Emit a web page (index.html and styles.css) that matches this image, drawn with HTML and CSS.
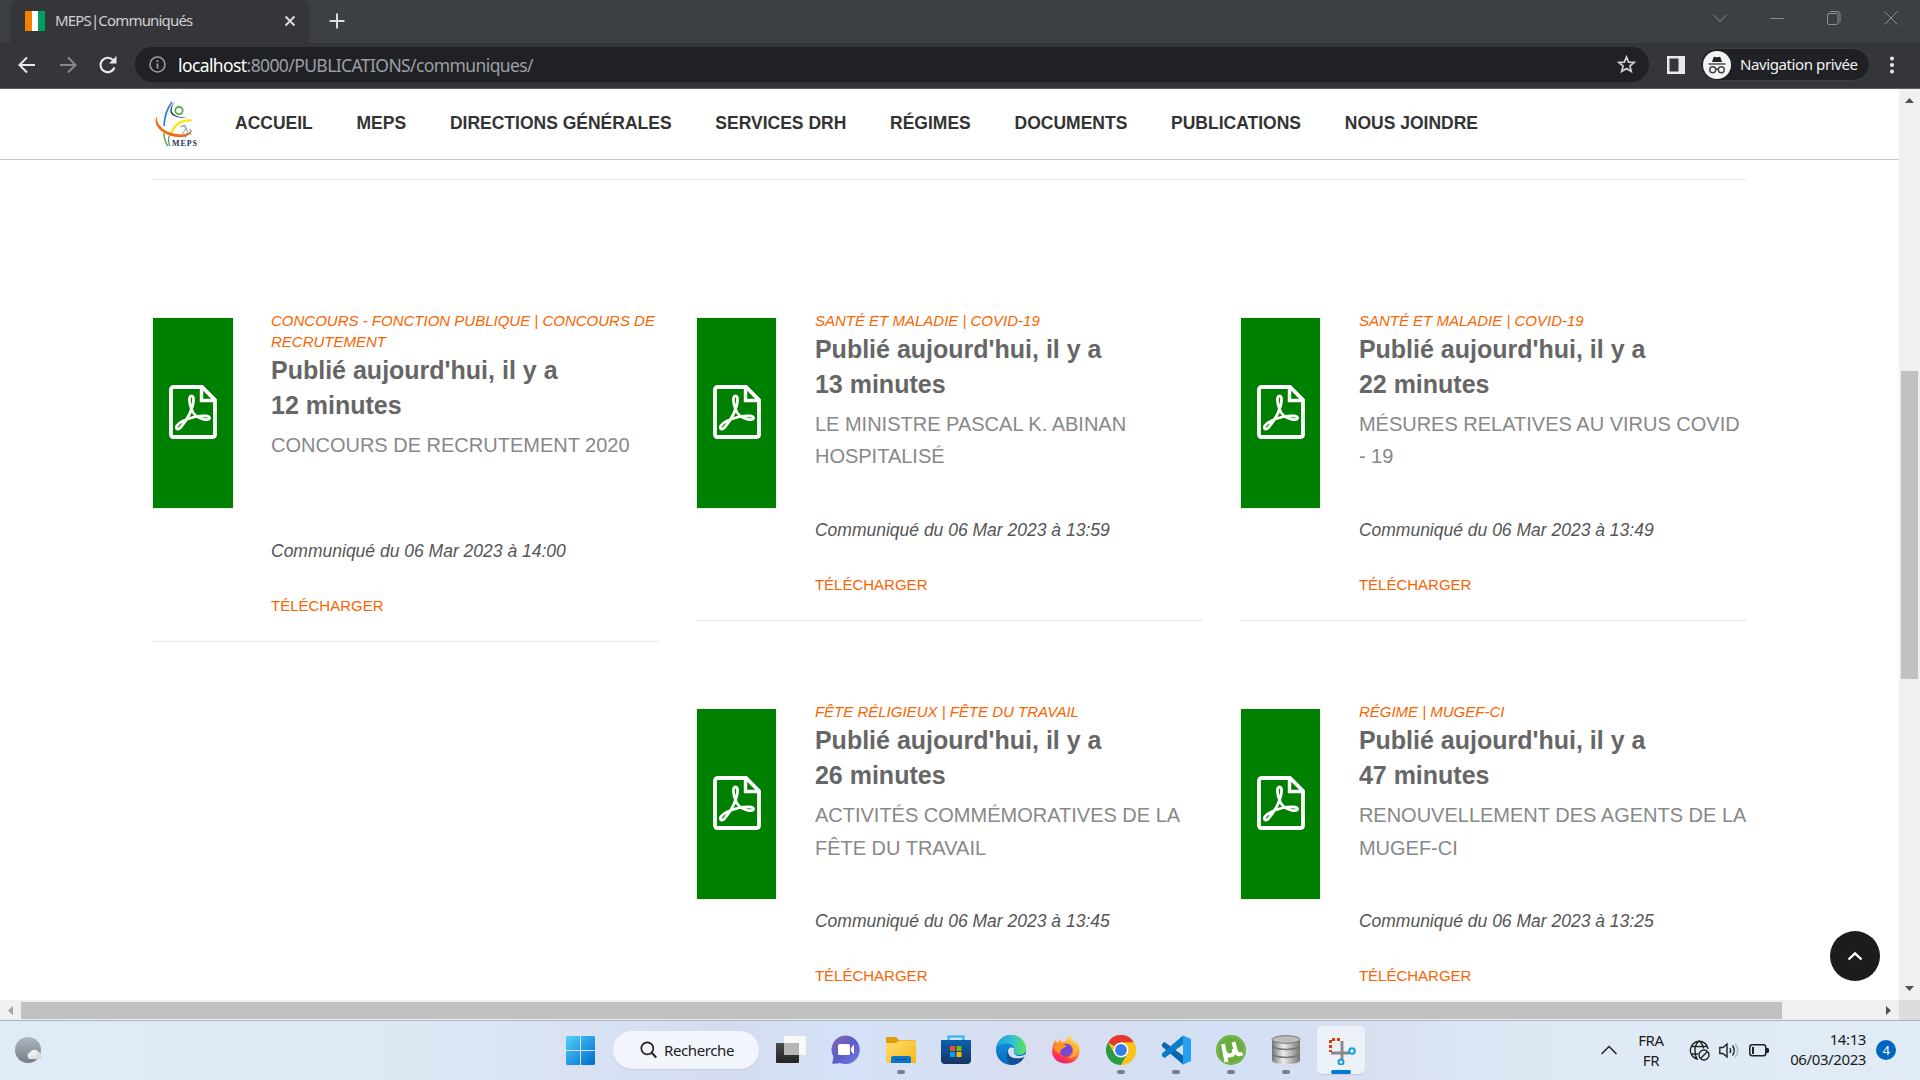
FILE: index.html
```html
<!DOCTYPE html>
<html lang="fr">
<head>
<meta charset="utf-8">
<title>MEPS|Communiqués</title>
<link rel="stylesheet" href="styles.css">
</head>
<body>
<svg width="0" height="0" class="defs">
  <defs>
    <symbol id="pdf" viewBox="0 0 48 54">
      <path d="M5 2H33L46 15V49.500Q46 52 43.500 52H4.500Q2 52 2 49.500V4.500Q2 2 5 2Z" fill="none" stroke="#fff" stroke-width="3.800"/>
      <path d="M32.500 2V15.500H46" fill="none" stroke="#fff" stroke-width="3.400"/>
      <path d="M22.500 11C19.500 11 20 18 22.500 24C20 32 16 37 12 42C9 45.500 6 44 8 40.500C11 36.500 19 33.500 27 31.500C36 30 41 31 40.500 33.500C39.500 36 31 34 27 31C24.500 28.500 23 26 22.500 24C25 18 25.500 11 22.500 11Z" fill="none" stroke="#fff" stroke-width="2.800"/>
    </symbol>
  </defs>
</svg>
<div class="screen">
  <div class="tabbar">
    <div class="tab">
      <span class="flag"><i class="o"></i><i class="w"></i><i class="g"></i></span>
      <span class="tab-title">MEPS|Communiqués</span>
      <svg width="12" height="12" viewBox="0 0 12 12"><path d="M1.500 1.500L10.500 10.500M10.500 1.500L1.500 10.500" stroke="#dadce0" stroke-width="1.900"/></svg>
    </div>
    <svg class="plus" width="16" height="16" viewBox="0 0 16 16"><path d="M8 .5V15.500M.5 8H15.500" stroke="#dadce0" stroke-width="2"/></svg>
    <div class="winbtns">
      <svg width="14" height="14" viewBox="0 0 14 14"><path d="M.5 4L7 10.500L13.500 4"/></svg>
      <svg width="14" height="14" viewBox="0 0 14 14"><path d="M.5 7.500H13.500"/></svg>
      <svg width="14" height="14" viewBox="0 0 14 14"><rect x=".5" y="2.500" width="10.500" height="11" rx="1.500"/><path d="M2.500 1Q3 .5 4 .5H10.500Q13 .5 13 3V10Q13 11 12.500 11.500"/></svg>
      <svg width="14" height="14" viewBox="0 0 14 14"><path d="M.5 .5L13.500 13.500M13.500 .5L.5 13.500"/></svg>
    </div>
  </div>
  <div class="toolbar">
    <svg width="18" height="18" viewBox="0 0 18 18"><path d="M17 9H2M9 1.500L1.500 9L9 16.500" fill="none" stroke="#e8eaed" stroke-width="2"/></svg>
    <svg class="fwd" width="18" height="18" viewBox="0 0 18 18"><path d="M1 9H16M9 1.500L16.500 9L9 16.500" fill="none" stroke="#85878b" stroke-width="2"/></svg>
    <svg class="reload" width="20" height="20" viewBox="0 0 20 20"><path d="M16.500 12.500A7.200 7.200 0 1 1 15 5" fill="none" stroke="#e8eaed" stroke-width="2.200"/><path d="M18.500 1V8.500H11Z" fill="#e8eaed"/></svg>
    <div class="omnibox">
      <svg width="17" height="17" viewBox="0 0 17 17"><circle cx="8.500" cy="8.500" r="7.500" fill="none" stroke="#9aa0a6" stroke-width="1.600"/><path d="M8.500 7.500V12.500M8.500 4.200V6" stroke="#9aa0a6" stroke-width="1.800"/></svg>
      <span class="url"><b>localhost</b>:8000/PUBLICATIONS/communiques/</span>
      <svg width="19" height="19" viewBox="0 0 19 19"><path d="M9.500 2L11.600 7.100L17.200 7.500L12.900 11.100L14.300 16.500L9.500 13.600L4.700 16.500L6.100 11.100L1.800 7.500L7.400 7.100Z" fill="none" stroke="#cfd1d4" stroke-width="1.700"/></svg>
    </div>
    <svg class="panel" width="18" height="18" viewBox="0 0 18 18"><path fill-rule="evenodd" d="M0 0H18V18H0ZM2.500 2.500V15.500H11.500V2.500Z" fill="#e8eaed"/></svg>
    <div class="private">
      <svg width="28" height="28" viewBox="0 0 28 28"><circle cx="14" cy="14" r="14" fill="#f1f3f4"/><path d="M9 11L10.500 6.500Q11 5.500 12.200 6Q14 6.700 15.800 6Q17 5.500 17.500 6.500L19 11Z" fill="#202124"/><path d="M5.500 13H22.500" stroke="#3c4043" stroke-width="1.400"/><g fill="none" stroke="#3c4043" stroke-width="1.400"><circle cx="9.700" cy="18.700" r="3"/><circle cx="18.300" cy="18.700" r="3"/><path d="M12.700 18.500Q14 17.500 15.300 18.500"/></g></svg>
      <span>Navigation privée</span>
    </div>
    <svg class="more" width="4" height="18" viewBox="0 0 4 18"><circle cx="2" cy="2.500" r="2"/><circle cx="2" cy="9" r="2"/><circle cx="2" cy="15.500" r="2"/></svg>
  </div>

  <div class="viewport">
    <div class="page">
      <header class="site-nav">
        <svg class="logo" width="42" height="48" viewBox="0 0 42 48">
          <path d="M17 2Q9.500 12 9 26" fill="none" stroke="#2a7fc4" stroke-width="1.700"/>
          <path d="M19.500 2Q14 11 19 14.500Q24 18 32 17.500Q24 19 18 15.500Q12 11 19.500 2Z" fill="#173a63"/>
          <circle cx="24" cy="10.500" r="3.700" fill="none" stroke="#43ad3c" stroke-width="1.700"/>
          <path d="M16 33Q22 19 37 20.500" fill="none" stroke="#fbe51b" stroke-width="2.200"/>
          <path d="M1.500 16Q1 26 13 32Q30 38 37.500 29.500Q34 41 14 35.500Q-3 28 1.500 16Z" fill="#ee6b12"/>
          <path d="M25 27L30 25L33 33L30 38M27 35L31 28L28 26M35 29L36 35" fill="none" stroke="#7d93a8" stroke-width=".9"/>
          <path d="M9 33Q9 41 13 46" fill="none" stroke="#57ad49" stroke-width="1.500"/>
          <path d="M14 36Q13 41 14.500 46" fill="none" stroke="#49657f" stroke-width="1"/>
          <text x="17" y="46" textLength="25" font-family="Liberation Serif, serif" font-weight="700" font-size="8" fill="#1c3553">MEPS</text>
        </svg>
        <nav>
          <a>ACCUEIL</a><a>MEPS</a><a>DIRECTIONS GÉNÉRALES</a><a>SERVICES DRH</a><a>RÉGIMES</a><a>DOCUMENTS</a><a>PUBLICATIONS</a><a>NOUS JOINDRE</a>
        </nav>
      </header>
      <main>
        <hr>
        <section class="cards">
          <article>
            <div class="thumb"><svg width="48" height="54"><use href="#pdf"/></svg></div>
            <div class="body"><p class="cat">CONCOURS - FONCTION PUBLIQUE | CONCOURS DE RECRUTEMENT</p><h3>Publié aujourd'hui, il y a<br>12 minutes</h3><p class="desc">CONCOURS DE RECRUTEMENT 2020</p><p class="date">Communiqué du 06 Mar 2023 à 14:00</p><a>TÉLÉCHARGER</a></div>
          </article>
          <article>
            <div class="thumb"><svg width="48" height="54"><use href="#pdf"/></svg></div>
            <div class="body"><p class="cat">SANTÉ ET MALADIE | COVID-19</p><h3>Publié aujourd'hui, il y a<br>13 minutes</h3><p class="desc">LE MINISTRE PASCAL K. ABINAN HOSPITALISÉ</p><p class="date">Communiqué du 06 Mar 2023 à 13:59</p><a>TÉLÉCHARGER</a></div>
          </article>
          <article>
            <div class="thumb"><svg width="48" height="54"><use href="#pdf"/></svg></div>
            <div class="body"><p class="cat">SANTÉ ET MALADIE | COVID-19</p><h3>Publié aujourd'hui, il y a<br>22 minutes</h3><p class="desc">MÉSURES RELATIVES AU VIRUS COVID - 19</p><p class="date">Communiqué du 06 Mar 2023 à 13:49</p><a>TÉLÉCHARGER</a></div>
          </article>
          <article class="second">
            <div class="thumb"><svg width="48" height="54"><use href="#pdf"/></svg></div>
            <div class="body"><p class="cat">FÊTE RÉLIGIEUX | FÊTE DU TRAVAIL</p><h3>Publié aujourd'hui, il y a<br>26 minutes</h3><p class="desc">ACTIVITÉS COMMÉMORATIVES DE LA FÊTE DU TRAVAIL</p><p class="date">Communiqué du 06 Mar 2023 à 13:45</p><a>TÉLÉCHARGER</a></div>
          </article>
          <article>
            <div class="thumb"><svg width="48" height="54"><use href="#pdf"/></svg></div>
            <div class="body"><p class="cat">RÉGIME | MUGEF-CI</p><h3>Publié aujourd'hui, il y a<br>47 minutes</h3><p class="desc">RENOUVELLEMENT DES AGENTS DE LA MUGEF-CI</p><p class="date">Communiqué du 06 Mar 2023 à 13:25</p><a>TÉLÉCHARGER</a></div>
          </article>
        </section>
      </main>
      <div class="totop"><svg width="16" height="10" viewBox="0 0 16 10"><path d="M1.500 8.500L8 2.300L14.500 8.500" fill="none" stroke="#fff" stroke-width="2.400"/></svg></div>
    </div>
    <div class="vscroll">
      <svg width="9" height="5" viewBox="0 0 9 5"><path d="M0 5L4.500 0L9 5Z" fill="#505050"/></svg>
      <div class="vthumb"></div>
      <svg class="down" width="9" height="5" viewBox="0 0 9 5"><path d="M0 0L4.500 5L9 0Z" fill="#505050"/></svg>
    </div>
    <div class="hscroll">
      <svg width="5" height="9" viewBox="0 0 5 9"><path d="M5 0L0 4.500L5 9Z" fill="#a3a3a3"/></svg>
      <div class="hthumb"></div>
      <svg class="right" width="5" height="9" viewBox="0 0 5 9"><path d="M0 0L5 4.500L0 9Z" fill="#505050"/></svg>
    </div>
    <div class="corner"></div>
  </div>

  <footer class="taskbar">
    <svg class="weather" width="28" height="26" viewBox="0 0 28 26"><defs><linearGradient id="wg" x2="0" y2="1"><stop stop-color="#adb8c2"/><stop offset="1" stop-color="#777d84"/></linearGradient><linearGradient id="wc" x2="1" y2="1"><stop stop-color="#fff"/><stop offset="1" stop-color="#cdd2d6"/></linearGradient></defs><circle cx="13" cy="13" r="13" fill="url(#wg)"/><path d="M14.500 22A3.500 3.500 0 0 1 15 15.500A5 5 0 0 1 24 15.500A3.400 3.400 0 0 1 25 22Z" fill="url(#wc)"/></svg>
    <div class="apps">
      <svg class="start" width="29" height="29" viewBox="0 0 29 29"><defs><linearGradient id="sg" x2="1" y2="1"><stop stop-color="#4fd2fb"/><stop offset="1" stop-color="#0069cd"/></linearGradient></defs><path d="M1 0H14V14H0V1ZM15 0H28L29 1V14H15ZM0 15H14V29H1L0 28ZM15 15H29V28L28 29H15Z" fill="url(#sg)"/></svg>
      <div class="search"><svg width="17" height="18" viewBox="0 0 17 18"><circle cx="7.300" cy="7.300" r="6" fill="none" stroke="#222" stroke-width="1.700"/><path d="M11.500 11.500L16.200 16.500" stroke="#222" stroke-width="2"/></svg><span>Recherche</span></div>
      <div class="app"><svg viewBox="0 0 30 30"><defs><linearGradient id="tv" x2="0" y2="1"><stop stop-color="#4b4b4b"/><stop offset="1" stop-color="#222"/></linearGradient></defs><rect y="8" width="23" height="20" fill="url(#tv)" rx="1"/><rect x="8" y="1" width="22" height="19" fill="#f8f8f8" rx="1"/><rect x="8" y="8" width="15" height="12" fill="#b6b6b6"/></svg></div>
      <div class="app"><svg viewBox="0 0 30 30"><defs><linearGradient id="cg" x2="1" y2="1"><stop stop-color="#8d68ad"/><stop offset=".5" stop-color="#5a5bc9"/><stop offset="1" stop-color="#7180e8"/></linearGradient></defs><path d="M15 .5A14.300 14.300 0 1 1 9 28Q5 29 1 28.500Q2 26 2.500 22A14.300 14.300 0 0 1 15 .5Z" fill="url(#cg)"/><rect x="7" y="9" width="12" height="11" rx="1.500" fill="#fff"/><path d="M20 13L23 9.500V19.500L20 16Z" fill="#fff"/></svg></div>
      <div class="app run"><svg viewBox="0 0 30 30"><defs><linearGradient id="fg" x2="1" y2="1"><stop stop-color="#ffdf78"/><stop offset="1" stop-color="#f9b60d"/></linearGradient></defs><path d="M0 3Q0 2 1 2H10L13 5H29V10H0Z" fill="#dc9d08"/><path d="M0 8H10L13 5.500H30V28H1Q0 28 0 27Z" fill="url(#fg)"/><path d="M5 28V23Q5 21 7 21H23Q25 21 25 23V28Z" fill="#0878cc"/><path d="M9 24.500H21" stroke="#075391" stroke-width="1.300"/></svg></div>
      <div class="app"><svg viewBox="0 0 30 30"><defs><linearGradient id="ms" x2="0" y2="1"><stop stop-color="#0b62ae"/><stop offset="1" stop-color="#17345f"/></linearGradient></defs><path d="M7.500 6V1.500H22.500V6" fill="none" stroke="#19b9ef" stroke-width="2"/><path d="M0 5H30V25Q30 29 26 29H4Q0 29 0 25Z" fill="url(#ms)"/><path d="M9 11h5v5H9z" fill="#f25022"/><path d="M15.500 11h5v5h-5z" fill="#7fba00"/><path d="M9 17h5v5H9z" fill="#00a4ef"/><path d="M15.500 17h5v5h-5z" fill="#ffb900"/></svg></div>
      <div class="app"><svg viewBox="0 0 30 30"><defs><linearGradient id="e1"><stop stop-color="#219fdd"/><stop offset=".55" stop-color="#2fc2d1"/><stop offset="1" stop-color="#62e64e"/></linearGradient><linearGradient id="e2" x2="0" y2="1"><stop stop-color="#1697dc"/><stop offset="1" stop-color="#0969c4"/></linearGradient></defs><circle cx="15" cy="15" r="15" fill="url(#e2)"/><path d="M.3 12C2 4.500 8 0 15 0C24 0 30 7 30 13.500C30 18 26.500 20 23 20C19 20 17.500 18.500 18 17C19.500 12 16 8.500 11 8.500C6 8.500 2 10 .3 12Z" fill="url(#e1)"/><path d="M11.500 16C12 13 15 11 18 13.500C18.800 15 18 16 18 17C17.500 20 22 22 27 20.500Q30 20 28 22.500C25 28 19 30.500 15 30C12 28 9.500 22 11.500 16Z" fill="#104e98"/><path d="M12 16C12.500 13 15 11 18 13.500C18.500 15 17.500 17 18 18C20 22 25 21.500 30 19.500L28.500 22C22 24.500 12 24 12 16Z" fill="#d6e0f3"/></svg></div>
      <div class="app"><svg viewBox="0 0 30 30"><defs><linearGradient id="ff" x1=".8" x2=".3" y2="1"><stop stop-color="#fff04a"/><stop offset=".45" stop-color="#ff942c"/><stop offset=".8" stop-color="#ff3550"/><stop offset="1" stop-color="#d51f87"/></linearGradient></defs><path d="M2 10L4 5L7 8L9 4Q10 7 13 7Q16 6 17 1Q21 2 23 8L25 6Q29 12 28.500 17C28 24 22 28.500 15 28.500C7 28.500 1 23 1 16Z" fill="url(#ff)"/><circle cx="15" cy="15" r="6.500" fill="#7547d5"/><path d="M3 11Q8 7 12 9L16 11L11 14Q9 14 9.500 18Q3 17 3 11Z" fill="#ff9227"/><path d="M18 8Q25 9 23 17Q22 21 17 22.500Q25 24 26 16Q25 9 19 7Z" fill="#ffb339"/></svg></div>
      <div class="app run"><svg viewBox="0 0 30 30"><circle cx="15" cy="15" r="15" fill="#fbc31b"/><path d="M15 15L2 7.500A15 15 0 0 1 28 7.500H15Z" fill="#e33b2e"/><path d="M2 7.500A15 15 0 0 0 15 30L21.500 18.700L8.500 18.700Z" fill="#2a9c48"/><path d="M21.500 18.700L15 30A15 15 0 0 0 28 7.500H15Z" fill="#fbc31b"/><circle cx="15" cy="15" r="7.500" fill="#fff"/><circle cx="15" cy="15" r="5.900" fill="#347eea"/></svg></div>
      <div class="app run"><svg viewBox="0 0 30 30"><path d="M1 9L3.500 7L22 20.500V29.500L1 11.500Z" fill="#0867ae"/><path d="M1 21L3.500 23L22 9.500V.5L1 18.500Z" fill="#087dc9"/><path d="M22 .5L30 4V26L22 29.500Z" fill="#26a0ed"/></svg></div>
      <div class="app run"><svg viewBox="0 0 30 30"><circle cx="15" cy="15" r="15" fill="#6aac3d"/><circle cx="15" cy="15" r="13.500" fill="none" stroke="#83bd59" stroke-width="1"/><path d="M7 9L10.500 27M8.500 16.500Q10 21 14 20.500Q19 20 18 14M17.500 7L20 16.500Q21.500 20.500 26.500 18.500" fill="none" stroke="#fff" stroke-width="4"/></svg></div>
      <div class="app run"><svg viewBox="0 0 30 30"><defs><linearGradient id="db"><stop stop-color="#737373"/><stop offset=".4" stop-color="#eee"/><stop offset="1" stop-color="#777"/></linearGradient></defs><path d="M1 4V25Q1 29 15 29Q29 29 29 25V4Z" fill="url(#db)"/><ellipse cx="15" cy="4.500" rx="14" ry="3.800" fill="#bcbcbc" stroke="#777"/><path d="M1 12Q15 17 29 12M1 20Q15 25 29 20" fill="none" stroke="#777" stroke-width="1.500"/></svg></div>
      <div class="app active"><svg viewBox="0 0 30 30"><rect x="1" y="1" width="19" height="21" fill="#f0efef"/><path d="M14 4.500H4.500V17" fill="none" stroke="#d13f12" stroke-width="3" stroke-dasharray="3 2"/><path d="M16 6V24M5 18H23" stroke="#81878d" stroke-width="2.800"/><g fill="#f2f5fb" stroke="#149cdd" stroke-width="2"><circle cx="26" cy="16" r="2.800"/><circle cx="15" cy="27" r="2.500"/></g></svg></div>
    </div>
    <div class="tray">
      <svg class="chev" width="16" height="10" viewBox="0 0 16 10"><path d="M.5 9L8 1.500L15.500 9" fill="none" stroke="#222" stroke-width="1.500"/></svg>
      <div class="lang">FRA<br>FR</div>
      <svg class="net" width="21" height="21" viewBox="0 0 21 21"><g fill="none" stroke="#222" stroke-width="1.400"><path d="M9 19.200A9 9 0 1 1 19.200 9M10 1Q5.500 5 6 11Q6 16 8 19M10 1Q14 4 14.500 8.500M2 6.500H18.500M2 14H9"/><circle cx="15" cy="15" r="5"/><path d="M11.500 18.500L18.500 11.500"/></g></svg>
      <svg class="vol" width="20" height="17" viewBox="0 0 20 17"><g fill="none" stroke="#222" stroke-width="1.400"><path d="M.8 5.500H4L8 2V15L4 11.500H.8Z"/><path d="M11 6Q12.500 8.500 11 11M13.500 3.500Q17 8.500 13.500 13.500"/><path d="M16 1.500Q21.500 8.500 16 15.500" stroke="#aeb9c3"/></g></svg>
      <svg class="bat" width="20" height="13" viewBox="0 0 20 13"><rect x=".8" y=".8" width="16" height="11" rx="2.500" fill="none" stroke="#222" stroke-width="1.500"/><path d="M3 3H5V10H3ZM17 4H19L20 5V8L19 9H17Z" fill="#222"/></svg>
      <div class="clock">14:13<br>06/03/2023</div>
      <div class="notif">4</div>
    </div>
  </footer>
</div>
</body>
</html>
```
FILE: styles.css
```css
* { box-sizing: border-box; }
body { margin: 0; overflow: hidden; font-family: "Liberation Sans", Arial, sans-serif; }
svg { display: block; flex: none; }
.defs { position: absolute; }
.screen { width: 1920px; height: 1080px; display: grid; grid-template-rows: 43px 46px 931px 60px; }

.tabbar { background: #3c4043; display: flex; padding-left: 10px; font-family: "Noto Sans", sans-serif; }
.tab { width: 300px; height: 43px; background: #35363a; border-radius: 10px 10px 0 0; display: flex; align-items: center; padding: 0 14px 1px 15px; }
.flag { display: flex; width: 20px; height: 20px; }
.flag i { flex: 1; }
.flag .o { background: #f77f00; }
.flag .w { background: #fff; }
.flag .g { background: #009e60; }
.tab-title { flex: 1; margin: -2px 0 0 10px; font-size: 15px; letter-spacing: -.83px; color: #cfd1d4; white-space: nowrap; }
.plus { margin: 13px 0 0 19px; }
.winbtns { margin: 11px 22px 0 auto; display: flex; gap: 43px; }
.winbtns svg { fill: none; stroke: #8d9092; stroke-width: 1; }

.toolbar { background: #35363a; border-bottom: 1px solid #606164; display: flex; align-items: center; padding: 0 25px 2px 18px; font-family: "Noto Sans", sans-serif; }
.fwd { margin-left: 23px; }
.reload { margin-left: 21px; }
.omnibox { margin-left: 17px; width: 1514px; height: 35px; border-radius: 18px; background: #202124; display: flex; align-items: center; padding: 0 13px 0 14px; }
.url { flex: 1; margin-left: 12px; font-size: 17.5px; letter-spacing: -.6px; color: #9aa0a6; white-space: nowrap; }
.url b { font-weight: 400; color: #fff; }
.panel { margin-left: 18px; }
.private { margin-left: 15px; width: 170px; height: 33px; border-radius: 17px; background: #202124; border: 1px solid #3e3f43; display: flex; align-items: center; padding-left: 2px; font-size: 15px; letter-spacing: -.4px; color: #f1f3f4; white-space: nowrap; }
.private span { margin: -2px 0 0 9px; }
.more { margin-left: 20px; fill: #e8eaed; }

.viewport { display: grid; grid-template-columns: 1899px 21px; grid-template-rows: 911px 20px; }
.page { background: #fff; overflow: hidden; position: relative; }
.site-nav { height: 71px; border-bottom: 1px solid #c8c8c8; display: flex; padding-left: 155px; }
.logo { margin-top: 11px; }
nav { display: flex; gap: 43.75px; margin: 23px 0 0 38px; font-size: 17.5px; line-height: 22px; font-weight: 700; color: #333; white-space: nowrap; }
main { margin: 0 152.1px; }
hr { margin: 19px 0 0; border: 0; height: 1px; background: #ededed; }
.cards { margin-top: 130px; display: grid; grid-template-columns: repeat(3, 1fr); column-gap: 37px; grid-template-rows: 391.4px 391.4px; align-items: start; }
.second { grid-column: 2; }
article { display: flex; border-bottom: 1px solid #ececec; }
.thumb { width: 81.42px; height: 192px; margin-top: 7px; background: #008000; border: 1px solid #f0f0f0; display: flex; align-items: center; justify-content: center; padding-bottom: 2px; flex: none; }
.body { margin-left: 37.5px; flex: 1; }
.body p, .body h3 { margin: 0; }
.body .cat { font-size: 15px; line-height: 21px; font-style: italic; color: #fa6400; }
.body h3 { margin-top: 1px; font-size: 25px; line-height: 35px; color: #666; }
.body .desc { margin-top: 5.7px; min-height: 82px; font-size: 20px; line-height: 32.5px; color: #888; }
.body .date { margin-top: 26.3px; font-size: 17.5px; line-height: 28px; font-style: italic; color: #555; }
.body a { display: block; margin: 29.7px 0 25.3px; font-size: 15px; line-height: 21px; color: #fa6400; }
.totop { position: absolute; right: 19px; bottom: 19px; width: 50px; height: 50px; border-radius: 50%; background: #1c1c1c; display: flex; align-items: center; justify-content: center; }

.vscroll { background: #f0f0f0; display: flex; flex-direction: column; align-items: center; padding: 9px 0; }
.vthumb { width: 17px; height: 308px; margin-top: 268px; background: #c1c1c1; }
.down { margin-top: auto; }
.hscroll { background: #f0f0f0; display: flex; align-items: center; padding: 0 8px; }
.hthumb { width: 1761px; height: 17px; margin-left: 8px; background: #c1c1c1; }
.right { margin-left: auto; }
.corner { background: #dcdcdc; }

.taskbar { border-top: 1px solid #adb3c3; padding-bottom: 1px; background: linear-gradient(90deg, #dfebf7 0, #e0eaf5 18%, #d8e0f3 32%, #d5dcef 38%, #d4e2f7 44%, #d8ddef 54%, #d3e0f5 64%, #d8dff0 70%, #dfeaf6 82%, #e0ebf6); display: flex; align-items: center; font-family: "Noto Sans", sans-serif; color: #1b1b1b; }
.weather { margin-left: 15px; }
.apps { display: flex; align-items: center; margin-left: 523px; }
.search { width: 146px; height: 38px; margin: 0 17px 0 18px; border-radius: 19px; background: #f2f5fc; box-shadow: 0 1px 1px #c4cce0; display: flex; align-items: center; padding-left: 27px; font-size: 15px; letter-spacing: -.4px; }
.search span { margin-left: 7px; }
.app { width: 30px; height: 30px; margin-right: 25px; position: relative; }
.app svg { width: 30px; height: 30px; position: relative; }
.run::after { content: ""; position: absolute; left: 11px; bottom: -9px; width: 8px; height: 4px; border-radius: 2px; background: #777d8a; }
.active::before { content: ""; position: absolute; inset: -9px; border-radius: 5px; background: #ecf0f9; box-shadow: 0 1px 1px #c4cad9; }
.active::after { content: ""; position: absolute; left: 5px; bottom: -9px; width: 20px; height: 4px; border-radius: 2px; background: #0078d4; }
.tray { margin: 0 24px 0 auto; display: flex; align-items: center; font-size: 15px; line-height: 20px; letter-spacing: -.4px; }
.lang { width: 40px; margin: -1px 0 0 14px; text-align: center; }
.net { margin-left: 18px; }
.vol { margin-left: 9px; }
.bat { margin-left: 10px; }
.clock { width: 88px; margin: -2px 0 0 9px; text-align: right; white-space: nowrap; }
.notif { width: 20px; height: 20px; margin-left: 10px; border-radius: 50%; background: #0067c0; color: #fff; text-align: center; font-size: 13px; }
```
